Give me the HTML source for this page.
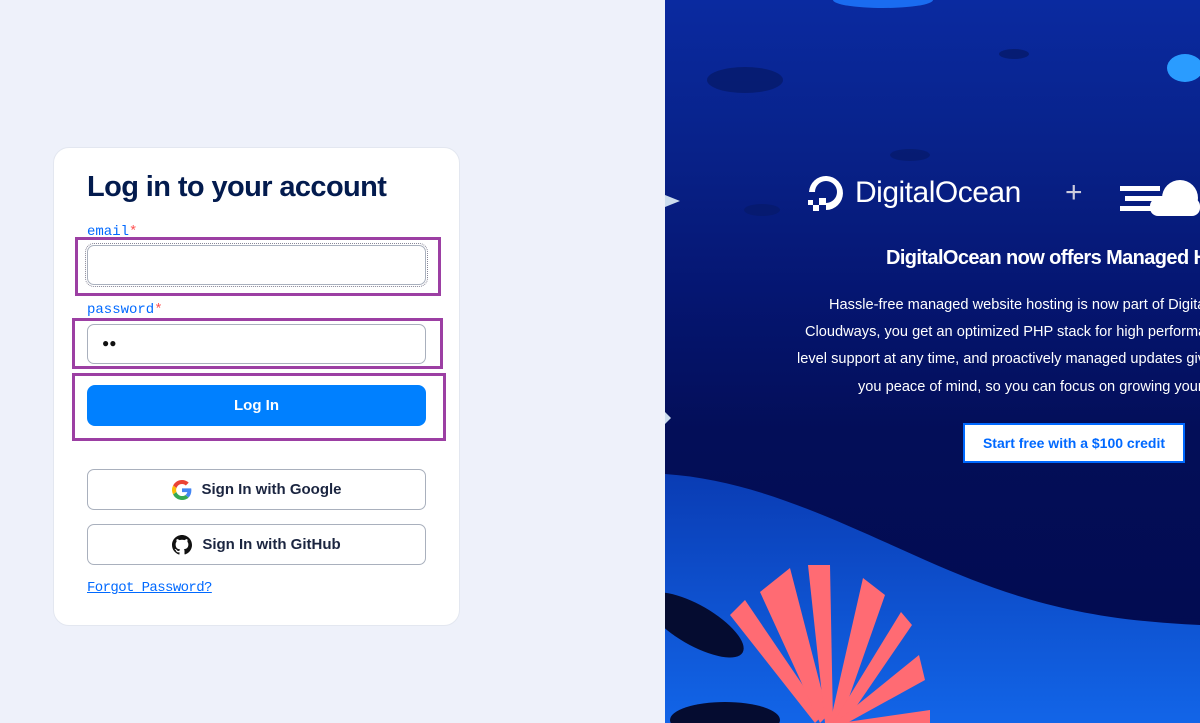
<!DOCTYPE html>
<html><head><style>
*{box-sizing:border-box;margin:0;padding:0}
body{width:1200px;height:723px;overflow:hidden;background:#eef1fa;font-family:"Liberation Sans",sans-serif;position:relative}
.card{position:absolute;left:53px;top:147px;width:407px;height:479px;background:#fff;border-radius:16px;border:1px solid #e3e7f0}
h1{position:absolute;left:87px;top:171px;font-size:29px;font-weight:700;color:#031b4e;letter-spacing:-0.6px}
.lbl{position:absolute;left:87px;font-family:"Liberation Mono",monospace;font-size:14px;color:#0069ff}
.lbl b{color:#ff4d4d;font-weight:400}
.inp{position:absolute;left:87px;width:339px;height:40px;border:1px solid #a9b0bd;border-radius:7px;background:#fff}
.hl{position:absolute;border:3px solid #9c3fa3}
.btn{position:absolute;left:87px;width:339px;height:41px;border-radius:8px;background:#0080ff;color:#fff;font-weight:700;font-size:15px;display:flex;align-items:center;justify-content:center}
.sbtn{position:absolute;left:87px;width:339px;height:41px;border-radius:7px;border:1px solid #a9b0bd;background:#fff;color:#1b2540;font-weight:700;font-size:15px;display:flex;align-items:center;justify-content:center;gap:10px}
.fp{position:absolute;left:87px;top:580px;font-family:"Liberation Mono",monospace;font-size:14px;color:#0069ff;text-decoration:underline;letter-spacing:-0.6px}
.right{position:absolute;left:665px;top:0;width:535px;height:723px;overflow:hidden;background:linear-gradient(180deg,#0a2aa0 0%,#08228a 20%,#051672 40%,#030e58 60%,#020a4e 100%)}
.rt{position:absolute;color:#fff;font-weight:700;white-space:nowrap}
.p{font-size:14.6px;font-weight:400}
</style></head><body>
<div class="card"></div>
<h1>Log in to your account</h1>
<div class="lbl" style="top:224px">email<b>*</b></div>
<div class="inp" style="top:245px;outline:1px dotted #889;outline-offset:1px"></div>
<div class="hl" style="left:75px;top:237px;width:366px;height:59px"></div>
<div class="lbl" style="top:302px">password<b>*</b></div>
<div class="inp" style="top:324px"><span style="position:absolute;left:14px;top:11px;font-size:12px;color:#111">●●</span></div>
<div class="hl" style="left:72px;top:318px;width:371px;height:51px"></div>
<div class="btn" style="top:385px">Log In</div>
<div class="hl" style="left:72px;top:373px;width:374px;height:68px"></div>
<div class="sbtn" style="top:469px"><svg width="20" height="20" viewBox="0 0 48 48"><path fill="#EA4335" d="M24 9.5c3.5 0 6.7 1.2 9.2 3.6l6.9-6.9C35.9 2.4 30.4 0 24 0 14.6 0 6.6 5.4 2.7 13.3l8 6.2C12.6 13.6 17.9 9.5 24 9.5z"/><path fill="#4285F4" d="M46.5 24.5c0-1.6-.1-3.1-.4-4.5H24v9h12.7c-.6 2.9-2.2 5.4-4.7 7.1l7.7 6c4.5-4.2 6.8-10.4 6.8-17.6z"/><path fill="#FBBC05" d="M10.7 28.6c-.5-1.5-.8-3-.8-4.6s.3-3.1.8-4.6l-8-6.2C1 16.6 0 20.2 0 24s1 7.4 2.7 10.7l8-6.1z"/><path fill="#34A853" d="M24 48c6.5 0 11.9-2.1 15.9-5.8l-7.7-6c-2.2 1.5-5 2.3-8.2 2.3-6.1 0-11.4-4.1-13.3-9.7l-8 6.1C6.6 42.6 14.6 48 24 48z"/></svg>Sign In with Google</div>
<div class="sbtn" style="top:524px"><svg width="20" height="20" viewBox="0 0 16 16"><path fill="#111" d="M8 0C3.6 0 0 3.6 0 8c0 3.5 2.3 6.5 5.5 7.6.4.1.5-.2.5-.4v-1.4c-2.2.5-2.7-1-2.7-1-.4-.9-.9-1.2-.9-1.2-.7-.5.1-.5.1-.5.8.1 1.2.8 1.2.8.7 1.2 1.9.9 2.3.7.1-.5.3-.9.5-1.1-1.8-.2-3.6-.9-3.6-4 0-.9.3-1.6.8-2.1-.1-.2-.4-1 .1-2.1 0 0 .7-.2 2.2.8.6-.2 1.3-.3 2-.3s1.4.1 2 .3c1.5-1 2.2-.8 2.2-.8.4 1.1.2 1.9.1 2.1.5.6.8 1.300.8 2.1 0 3.1-1.9 3.7-3.6 3.9.3.3.5.8.5 1.5v2.2c0 .2.1.5.6.4C13.7 14.5 16 11.5 16 8c0-4.4-3.6-8-8-8z"/></svg>Sign In with GitHub</div>
<div class="fp">Forgot Password?</div>
<div class="right">
<svg width="535" height="723" style="position:absolute;left:0;top:0">
<defs><linearGradient id="w" x1="0" y1="0" x2="0" y2="1"><stop offset="0" stop-color="#0a3cb4"/><stop offset="1" stop-color="#1265e8"/></linearGradient></defs>
<path d="M0 474 C90 480 170 520 260 560 C350 600 420 620 535 625 L535 723 L0 723 Z" fill="url(#w)"/>
<ellipse cx="30" cy="625" rx="55" ry="20" fill="#050c30" transform="rotate(30 30 625)"/>
<ellipse cx="60" cy="720" rx="55" ry="18" fill="#050c30"/>
<g fill="#ff6b73">
<polygon points="150,723 65,615 80,600 158,715"/>
<polygon points="155,723 95,592 125,568 163,715"/>
<polygon points="160,723 143,565 165,565 168,723"/>
<polygon points="165,723 198,578 220,595 175,723"/>
<polygon points="168,723 236,612 247,625 180,723"/>
<polygon points="170,723 254,655 260,680 182,723"/>
<polygon points="175,723 265,710 265,723"/>
</g>
<ellipse cx="80" cy="80" rx="38" ry="13" fill="#061a6a" opacity=".8"/>
<ellipse cx="349" cy="54" rx="15" ry="5" fill="#061a6a" opacity=".8"/>
<ellipse cx="245" cy="155" rx="20" ry="6" fill="#061a6a" opacity=".7"/>
<ellipse cx="97" cy="210" rx="18" ry="6" fill="#061a6a" opacity=".7"/>
<ellipse cx="520" cy="68" rx="18" ry="14" fill="#2a9cff"/>
<ellipse cx="218" cy="0" rx="50" ry="8" fill="#1a6cf0"/>
<polygon points="0,195 15,201 0,207" fill="#cde"/>
<polygon points="0,412 6,418 0,424" fill="#cde"/>
</svg>
<svg style="position:absolute;left:140px;top:172px" width="42" height="42" viewBox="0 0 42 42"><path d="M17 38v-7a11 11 0 1 0-11-11H0A17 17 0 1 1 17 38z" fill="#fff" transform="translate(4,0)"/><rect x="14" y="26" width="7" height="7" fill="#fff"/><rect x="8" y="33" width="6" height="6" fill="#fff"/><rect x="3" y="28" width="5" height="5" fill="#fff"/></svg>
<div class="rt" style="left:190px;top:176px;font-size:30px;font-weight:400;letter-spacing:-0.5px">DigitalOcean</div>
<div class="rt" style="left:400px;top:176px;font-size:30px;font-weight:300;color:#ccd">+</div>
<svg style="position:absolute;left:455px;top:176px" width="80" height="42"><rect x="0" y="10" width="40" height="5" fill="#fff"/><rect x="5" y="20" width="40" height="5" fill="#fff"/><rect x="0" y="30" width="40" height="5" fill="#fff"/><circle cx="60" cy="22" r="18" fill="#fff"/><rect x="30" y="22" width="50" height="18" rx="8" fill="#fff"/></svg>
<div class="rt" style="left:221px;top:247px;font-size:20px;letter-spacing:-0.6px">DigitalOcean now offers Managed Hosting</div>
<div class="rt p" style="left:164px;top:297px">Hassle-free managed website hosting is now part of DigitalOcean</div>
<div class="rt p" style="left:140px;top:324px">Cloudways, you get an optimized PHP stack for high performance</div>
<div class="rt p" style="left:132px;top:351px">level support at any time, and proactively managed updates give</div>
<div class="rt p" style="left:193px;top:379px">you peace of mind, so you can focus on growing your business</div>
<div style="position:absolute;left:298px;top:423px;width:222px;height:40px;background:#fff;border:2px solid #0069ff;color:#0069ff;font-weight:700;font-size:14px;display:flex;align-items:center;justify-content:center">Start free with a $100 credit</div>
</div>
</body></html>
